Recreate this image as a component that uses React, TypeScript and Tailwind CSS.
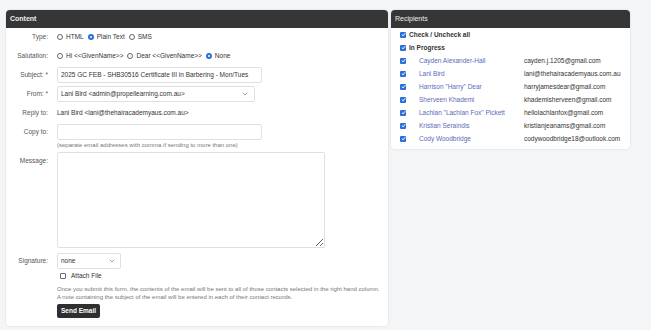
import React from 'react';

const recipients = [
  { name: 'Cayden Alexander-Hall', email: 'cayden.j.1205@gmail.com' },
  { name: 'Lani Bird', email: 'lani@thehairacademyaus.com.au' },
  { name: 'Harrison "Harry" Dear', email: 'harryjamesdear@gmail.com' },
  { name: 'Sherveen Khademi', email: 'khademisherveen@gmail.com' },
  { name: 'Lachlan "Lachlan Fox" Pickett', email: 'hellolachlanfox@gmail.com' },
  { name: 'Kristian Seraindis', email: 'kristianjeanams@gmail.com' },
  { name: 'Cody Woodbridge', email: 'codywoodbridge18@outlook.com' },
];

const Chevron = () => (
  <svg width="6" height="4" viewBox="0 0 6 4" fill="none" stroke="#888" strokeWidth="0.8">
    <path d="M0.8 0.8 L3 3 L5.2 0.8" />
  </svg>
);

const Radio: React.FC<{ label: string; checked?: boolean }> = ({ label, checked }) => (
  <label className="flex items-center gap-[3px] mr-[4px]">
    <span
      className={
        checked
          ? 'w-[6px] h-[6px] rounded-full border-[2px] border-[#2b6fd8] bg-white flex'
          : 'w-[6px] h-[6px] rounded-full border-[0.7px] border-[#666] bg-white flex'
      }
    />
    <span>{label}</span>
  </label>
);

const Check = () => (
  <span className="w-[6px] h-[6px] rounded-[1px] bg-[#2b6fd8] flex items-center justify-center shrink-0">
    <svg width="5" height="5" viewBox="0 0 6 6" fill="none" stroke="white" strokeWidth="1.2">
      <path d="M1 3.2 L2.5 4.6 L5 1.5" />
    </svg>
  </span>
);

const Row: React.FC<{ label: string; children: React.ReactNode; top?: boolean }> = ({ label, children, top }) => (
  <div className={top ? 'flex items-start' : 'flex items-center min-h-4'}>
    <div className={top ? 'w-[42px] text-right text-[#555] pt-[4px]' : 'w-[42px] text-right text-[#555]'}>{label}</div>
    <div className="ml-[9px] flex-1">{children}</div>
  </div>
);

export default function App() {
  return (
    <div
      className="min-h-[330px] w-[651px] bg-[#f3f5f6] flex items-start gap-[3px] pl-[6px] pt-[10px] text-[6.5px] text-[#333] whitespace-nowrap"
      style={{ fontFamily: '"Liberation Sans", Arial, sans-serif' }}
    >
      <div className="w-[382px] bg-white rounded-[4px] shadow-[0_0_2px_rgba(0,0,0,0.15)] pb-[8px]">
        <div className="h-[18px] bg-[#363636] rounded-t-[4px] flex items-center px-[4px] font-bold text-[7px] text-[#eee]">Content</div>
        <div className="flex flex-col gap-[3px] pt-[1px]">
          <Row label="Type:">
            <div className="flex items-center">
              <Radio label="HTML" />
              <Radio label="Plain Text" checked />
              <Radio label="SMS" />
            </div>
          </Row>
          <Row label="Salutation:">
            <div className="flex items-center">
              <Radio label="Hi <<GivenName>>" />
              <Radio label="Dear <<GivenName>>" />
              <Radio label="None" checked />
            </div>
          </Row>
          <Row label="Subject: *">
            <div className="w-[205px] h-4 border border-[#e0e0e0] rounded-[2px] flex items-center px-[3px]">
              2025 GC FEB - SHB30516 Certificate III in Barbering - Mon/Tues
            </div>
          </Row>
          <Row label="From: *">
            <div className="w-[198px] h-4 border border-[#e0e0e0] rounded-[2px] flex items-center justify-between pl-[3px] pr-[6px]">
              <span>Lani Bird &lt;admin@propellearning.com.au&gt;</span>
              <Chevron />
            </div>
          </Row>
          <Row label="Reply to:">
            <div>Lani Bird &lt;lani@thehairacademyaus.com.au&gt;</div>
          </Row>
          <Row label="Copy to:">
            <div className="w-[205px] h-4 border border-[#e0e0e0] rounded-[2px]" />
          </Row>
        </div>
        <div className="ml-[51px] mt-[1px] text-[6px] text-[#777] leading-[9px]">
          (separate email addresses with comma if sending to more than one)
        </div>
        <div className="mt-[2px]">
          <Row label="Message:" top>
            <textarea className="w-[268px] h-[96px] border border-[#e0e0e0] rounded-[2px] block outline-none" />
          </Row>
        </div>
        <div className="mt-[5px]">
          <Row label="Signature:">
            <div className="w-[64px] h-4 border border-[#e0e0e0] rounded-[2px] flex items-center justify-between pl-[3px] pr-[5px]">
              <span>none</span>
              <Chevron />
            </div>
          </Row>
        </div>
        <div className="ml-[54px] mt-[3px] h-[8px] flex items-center gap-[5px]">
          <span className="w-[6px] h-[6px] border-[0.7px] border-[#666] rounded-[1px]" />
          <span>Attach File</span>
        </div>
        <div className="ml-[51px] mt-[5px] text-[6px] leading-[8px] text-[#777]">
          <div>Once you submit this form, the contents of the email will be sent to all of those contacts selected in the right hand column.</div>
          <div>A note containing the subject of the email will be entered in each of their contact records.</div>
        </div>
        <div className="ml-[51px] mt-[3px]">
          <div className="w-[43px] h-[14px] bg-[#2f2f2f] rounded-[2px] flex items-center justify-center text-white font-bold">
            Send Email
          </div>
        </div>
      </div>
      <div className="w-[239px] bg-white rounded-[4px] shadow-[0_0_2px_rgba(0,0,0,0.15)] pb-[4px]">
        <div className="h-[18px] bg-[#363636] rounded-t-[4px] flex items-center px-[4px] text-[7px] text-[#eee]">Recipients</div>
        <div className="pl-[9px]">
          <div className="h-[13px] flex items-center gap-[3px] font-bold">
            <Check />
            <span>Check / Uncheck all</span>
          </div>
          <div className="h-[13px] flex items-center gap-[3px] font-bold">
            <Check />
            <span>In Progress</span>
          </div>
          {recipients.map((r, i) => (
            <div key={i} className="h-[13px] flex items-center">
              <Check />
              <span className="ml-[13px] w-[105px] text-[#5b6bb8]">{r.name}</span>
              <span>{r.email}</span>
            </div>
          ))}
        </div>
      </div>
    </div>
  );
}
